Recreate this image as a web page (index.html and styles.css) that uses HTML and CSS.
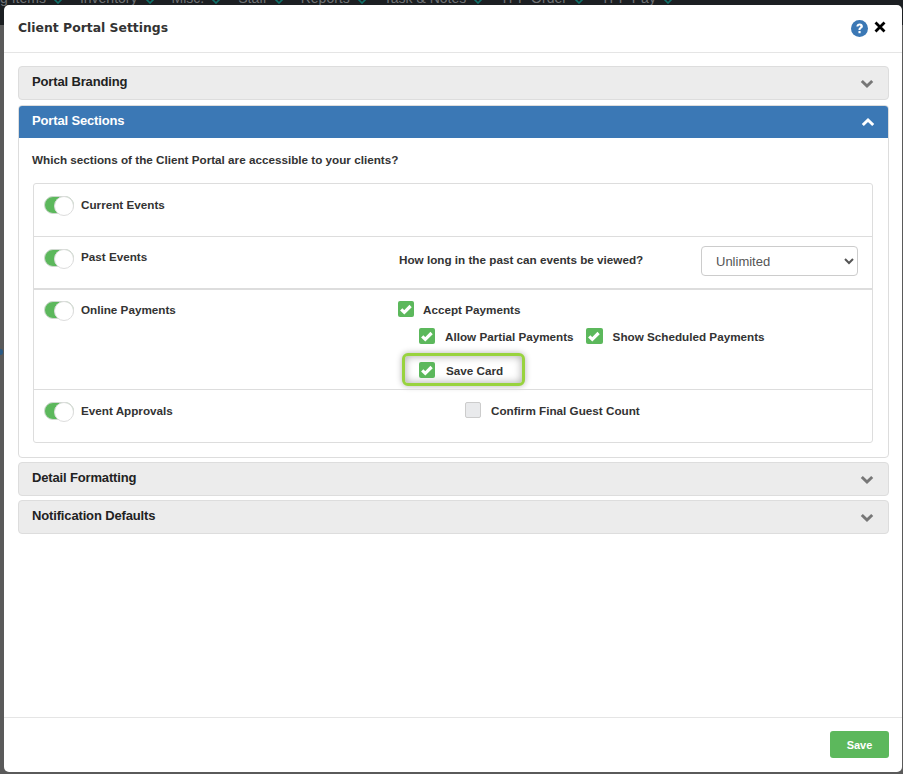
FILE: index.html
```html
<!DOCTYPE html>
<html lang="en">
<head>
<meta charset="utf-8">
<title>Client Portal Settings</title>
<link rel="stylesheet" href="styles.css">
</head>
<body>
<div class="navbar">
  <div class="nav-track">
    <span class="nav-item">g Items<svg class="nav-chev" viewBox="0 0 10 6" width="10" height="6"><path d="M1 1l4 4 4-4" stroke="#0f6f68" stroke-width="1.600" fill="none"/></svg></span>
    <span class="nav-item">Inventory<svg class="nav-chev" viewBox="0 0 10 6" width="10" height="6"><path d="M1 1l4 4 4-4" stroke="#0f6f68" stroke-width="1.600" fill="none"/></svg></span>
    <span class="nav-item">Misc.<svg class="nav-chev" viewBox="0 0 10 6" width="10" height="6"><path d="M1 1l4 4 4-4" stroke="#0f6f68" stroke-width="1.600" fill="none"/></svg></span>
    <span class="nav-item">Staff<svg class="nav-chev" viewBox="0 0 10 6" width="10" height="6"><path d="M1 1l4 4 4-4" stroke="#0f6f68" stroke-width="1.600" fill="none"/></svg></span>
    <span class="nav-item">Reports<svg class="nav-chev" viewBox="0 0 10 6" width="10" height="6"><path d="M1 1l4 4 4-4" stroke="#0f6f68" stroke-width="1.600" fill="none"/></svg></span>
    <span class="nav-item">Task &amp; Notes<svg class="nav-chev" viewBox="0 0 10 6" width="10" height="6"><path d="M1 1l4 4 4-4" stroke="#0f6f68" stroke-width="1.600" fill="none"/></svg></span>
    <span class="nav-item">TPP Order<svg class="nav-chev" viewBox="0 0 10 6" width="10" height="6"><path d="M1 1l4 4 4-4" stroke="#0f6f68" stroke-width="1.600" fill="none"/></svg></span>
    <span class="nav-item">TPP Pay<svg class="nav-chev" viewBox="0 0 10 6" width="10" height="6"><path d="M1 1l4 4 4-4" stroke="#0f6f68" stroke-width="1.600" fill="none"/></svg></span>
  </div>
</div>
<span class="edge-dot"></span>
<div class="modal">
  <header class="modal-header">
    <h1 class="modal-title">Client Portal Settings</h1>
    <div class="modal-tools">
      <svg class="help" viewBox="0 0 18 18" width="17" height="17"><circle cx="9" cy="9" r="9" fill="#3b78b5"/><path d="M5.700 7C5.800 4.900 7.300 3.600 9.300 3.600c2 0 3.300 1.200 3.300 2.900 0 1.300-.8 2-1.600 2.600-.7.5-.9.8-.9 1.500H7.900c0-1.400.4-2 1.200-2.600.7-.5 1-.8 1-1.300 0-.6-.4-1-1-1-.7 0-1.200.5-1.300 1.300z" fill="#fff"/><rect x="7.900" y="11.600" width="2.300" height="2.400" fill="#fff"/></svg>
      <svg class="close" viewBox="0 0 12 12" width="12" height="12"><path d="M1.500 1.500l9 9M10.500 1.500l-9 9" stroke="#000" stroke-width="2.800" fill="none"/></svg>
    </div>
  </header>
  <main class="modal-body">
    <section class="panel">
      <div class="panel-head"><span>Portal Branding</span><svg class="chev" viewBox="0 0 14 10" width="14" height="10"><path d="M1.800 2l5.200 5 5.200-5" stroke="#777" stroke-width="3" fill="none"/></svg></div>
    </section>
    <section class="panel open">
      <div class="panel-head active"><span>Portal Sections</span><svg class="chev" viewBox="0 0 14 10" width="14" height="10"><path d="M1.800 8l5.200-5 5.200 5" stroke="#fff" stroke-width="3" fill="none"/></svg></div>
      <div class="panel-body">
        <p class="question">Which sections of the Client Portal are accessible to your clients?</p>
        <div class="list">
          <div class="row row-current">
            <div class="lead"><span class="switch"></span><span class="lbl">Current Events</span></div>
          </div>
          <div class="row row-past">
            <div class="lead"><span class="switch"></span><span class="lbl">Past Events</span></div>
            <div class="past-opt">
              <span class="lbl">How long in the past can events be viewed?</span>
              <select class="select"><option>Unlimited</option></select>
            </div>
          </div>
          <div class="row row-pay">
            <div class="lead"><span class="switch"></span><span class="lbl">Online Payments</span></div>
            <div class="pay-opts">
              <label class="check"><span class="box on"><svg viewBox="0 0 16 16" width="16" height="16"><path d="M3.200 8.300l3.100 3 6.300-6.300" stroke="#fff" stroke-width="3.200" fill="none"/></svg></span><span class="lbl">Accept Payments</span></label>
              <div class="pay-sub">
                <label class="check"><span class="box on"><svg viewBox="0 0 16 16" width="16" height="16"><path d="M3.200 8.300l3.100 3 6.300-6.300" stroke="#fff" stroke-width="3.200" fill="none"/></svg></span><span class="lbl">Allow Partial Payments</span></label>
                <label class="check"><span class="box on"><svg viewBox="0 0 16 16" width="16" height="16"><path d="M3.200 8.300l3.100 3 6.300-6.300" stroke="#fff" stroke-width="3.200" fill="none"/></svg></span><span class="lbl">Show Scheduled Payments</span></label>
              </div>
              <div class="highlight">
                <label class="check"><span class="box on"><svg viewBox="0 0 16 16" width="16" height="16"><path d="M3.200 8.300l3.100 3 6.300-6.300" stroke="#fff" stroke-width="3.200" fill="none"/></svg></span><span class="lbl">Save Card</span></label>
              </div>
            </div>
          </div>
          <div class="row row-approve">
            <div class="lead"><span class="switch"></span><span class="lbl">Event Approvals</span></div>
            <label class="check guest"><span class="box"></span><span class="lbl">Confirm Final Guest Count</span></label>
          </div>
        </div>
      </div>
    </section>
    <section class="panel">
      <div class="panel-head"><span>Detail Formatting</span><svg class="chev" viewBox="0 0 14 10" width="14" height="10"><path d="M1.800 2l5.200 5 5.200-5" stroke="#777" stroke-width="3" fill="none"/></svg></div>
    </section>
    <section class="panel">
      <div class="panel-head"><span>Notification Defaults</span><svg class="chev" viewBox="0 0 14 10" width="14" height="10"><path d="M1.800 2l5.200 5 5.200-5" stroke="#777" stroke-width="3" fill="none"/></svg></div>
    </section>
  </main>
  <footer class="modal-footer"><button class="save">Save</button></footer>
</div>
</body>
</html>
```

FILE: styles.css
```css
* { box-sizing: border-box; }
html, body { height: 100%; }
body {
  margin: 0;
  height: 774px;
  overflow: hidden;
  background: #5a5a5a;
  font-family: "Liberation Sans", Arial, sans-serif;
  color: #333;
  display: flex;
  flex-direction: column;
  position: relative;
}
.navbar {
  height: 25px;
  margin-bottom: -20px;
  background: #1c1f22;
  overflow: hidden;
  flex: none;
}
.nav-track {
  display: flex;
  gap: 17px;
  margin-top: -10px;
  color: #6f7174;
  font-size: 14px;
  line-height: 16px;
  white-space: nowrap;
}
.nav-item { display: flex; align-items: flex-end; gap: 7px; }
.nav-chev { display: block; margin-bottom: 2px; }
.edge-dot {
  position: absolute;
  left: -2px; top: 349px;
  width: 5px; height: 6px;
  border-radius: 50%;
  background: #2a5a85;
}
.modal {
  flex: none;
  margin: 0 1px 0 4px;
  height: 767px;
  background: #fff;
  border-radius: 5px;
  display: flex;
  flex-direction: column;
  position: relative;
}
.modal-header {
  height: 48px;
  flex: none;
  border-bottom: 1px solid #e5e5e5;
  display: flex;
  align-items: center;
  justify-content: space-between;
  padding: 0 16px 0 14px;
}
.modal-title {
  margin: -2px 0 0;
  font-family: "DejaVu Sans", sans-serif;
  font-size: 12.4px;
  font-weight: 700;
  color: #333;
}
.modal-tools { display: flex; align-items: flex-start; gap: 6px; }
.help { display: block; }
.close { display: block; margin-top: 1px; }
.modal-body { flex: 1; padding: 13px 13px 0 14px; display: flex; flex-direction: column; gap: 4px; }
.panel { border-radius: 4px; }
.panel-head {
  height: 34px;
  background: #ececec;
  border: 1px solid #ddd;
  border-radius: 4px;
  display: flex;
  align-items: center;
  justify-content: space-between;
  padding: 0 14px 4px 13px;
  font-size: 13px;
  letter-spacing: -.15px;
  font-weight: 700;
  color: #222;
}
.panel-head .chev { margin-top: 5px; }
.panel.open { border: 1px solid #ddd; margin-top: 1px; }
.panel-head.active {
  background: #3b78b5;
  border: 0;
  border-radius: 3px 3px 0 0;
  color: #fff;
  height: 32px;
  padding: 0 13px 3px 13px;
}
.panel-head.active .chev { margin-top: 3px; }
.panel-body { padding: 14px 15px 14px 13px; }
.question { margin: 0 0 16px; font-size: 11.7px; font-weight: 700; line-height: 15px; color: #333; }
.list { border: 1px solid #ddd; border-radius: 3px; margin-left: 1px; }
.row { display: flex; position: relative; padding: 0 14px 0 10px; }
.row + .row { border-top: 1px solid #ddd; }
.row-current { height: 52px; padding-top: 12px; }
.row-past { height: 53px; padding-top: 12px; border-bottom: 1px solid #ddd; }
.row-pay { height: 100px; padding-top: 11px; }
.row-approve { height: 53px; padding-top: 12px; }
.lead { width: 355px; flex: none; display: flex; gap: 7px; align-items: flex-start; }
.switch {
  width: 30px; height: 18px;
  background: #5cb85c;
  border: 1px solid #cfd8cf;
  border-radius: 9px;
  position: relative;
  flex: none;
}
.switch::after {
  content: "";
  position: absolute;
  right: -1px; top: -1px;
  width: 18px; height: 18px;
  border-radius: 50%;
  background: #fff;
  border: 1px solid #ddd;
}
.lbl { font-size: 11.7px; font-weight: 700; line-height: 15px; color: #333; white-space: nowrap; }
.lead .lbl { margin-top: 1px; }
.row-past .lead .lbl { margin-top: 0; }
.past-opt { flex: 1; display: flex; justify-content: space-between; align-items: flex-start; }
.past-opt .lbl { margin-top: 3px; }
.select {
  width: 157px; height: 30px; margin-top: -3px;
  border: 1px solid #ccc; border-radius: 4px;
  background: #fff;
  padding: 0 10px;
  font: 13px "Liberation Sans", Arial, sans-serif;
  color: #555;
}
.pay-opts { display: flex; flex-direction: column; align-items: flex-start; margin-left: -1px; }
.check { display: flex; align-items: center; gap: 9px; }
.box {
  width: 16px; height: 16px; flex: none;
  border-radius: 2px;
  background: #e9eaec;
  border: 1px solid #ccc;
  display: block;
}
.box.on { background: #5cb85c; border: 0; }
.box svg { display: block; }
.pay-sub { display: flex; gap: 12px; margin: 11px 0 0 21px; }
.pay-sub .check { gap: 10px; }
.pay-sub .check + .check .box { width: 17px; }
.highlight {
  margin: 9px 0 0 4px;
  width: 123px; height: 33px;
  border: 3px solid #98d33e;
  border-radius: 6px;
  box-shadow: 0 0 6px rgba(0,0,0,.3), inset 0 0 8px rgba(0,0,0,.35);
  padding: 6px 0 0 14px;
  background: #fff;
}
.highlight .check { gap: 11px; }
.guest { margin-left: 66px; gap: 10px; align-self: flex-start; }
.modal-footer {
  height: 55px; flex: none;
  border-top: 1px solid #e5e5e5;
  display: flex;
  justify-content: flex-end;
  padding: 13px 13px 0 0;
}
.save {
  width: 59px; height: 27px;
  background: #5cb85c;
  border: 0;
  border-radius: 3px;
  color: #fff;
  font: 700 11px "Liberation Sans", Arial, sans-serif;
}
```
